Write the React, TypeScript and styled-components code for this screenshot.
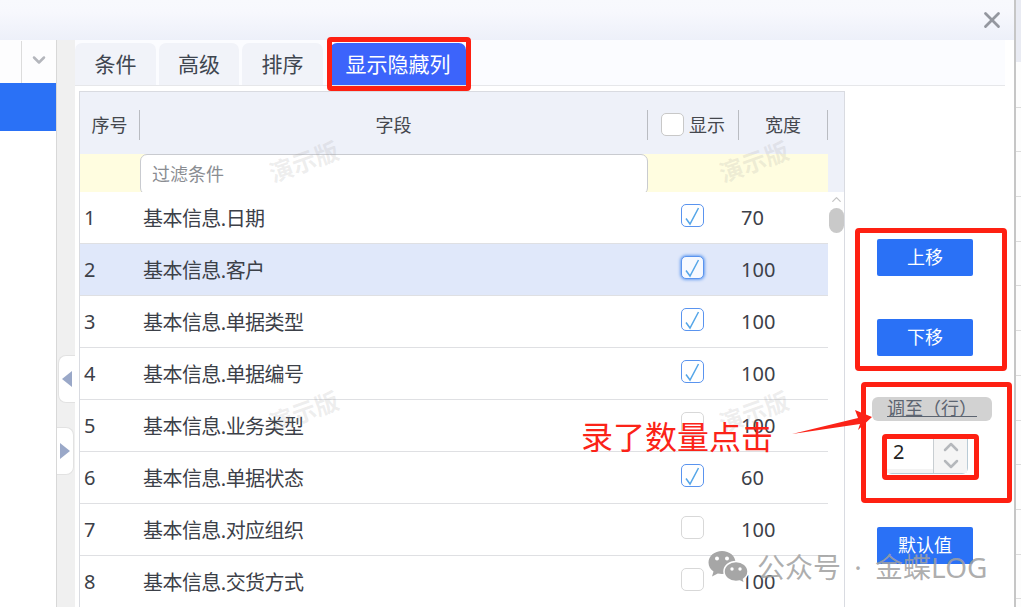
import React from 'react';
import styled, { createGlobalStyle } from 'styled-components';
import { ChevronDown, ChevronUp, X } from 'lucide-react';

const GlobalStyle = createGlobalStyle`
  html, body { margin: 0; padding: 0; background: #fff; }
  * { box-sizing: border-box; }
  body { font-family: "Noto Sans", "Noto Sans CJK SC", sans-serif; color: #3c4048; }
`;

const Page = styled.div`
  position: relative;
  width: 1021px;
  height: 607px;
  overflow: hidden;
  display: flex;
  background: #fff;
`;

const Dialog = styled.div`
  width: 1016px;
  height: 607px;
  flex: none;
  border-right: 2px solid #c6c6c6;
  display: flex;
  flex-direction: column;
`;

// the list page behind the dialog, only a sliver of it shows
const BackStrip = styled.div`
  flex: 1;
  background:
    linear-gradient(#e9ebf3, #e9ebf3) top / 100% 62px no-repeat,
    repeating-linear-gradient(#fdfdfd 0, #fdfdfd 43.7px, #dcdcdc 43.7px, #dcdcdc 44.7px) 0 63px;
`;

const TitleBar = styled.div`
  height: 40px;
  flex: none;
  display: flex;
  justify-content: flex-end;
  align-items: center;
  padding-right: 9px;
  color: #94979f;
  background: linear-gradient(#f8f9fd, #f7f8fd 30%, #edf0f9);
`;

const Body = styled.div`
  flex: 1;
  min-height: 0;
  display: flex;
`;

const LeftPanel = styled.div`
  width: 57px;
  flex: none;
  border-right: 1px solid #d8d8d8;
`;

const LeftHead = styled.div`
  height: 43px;
  display: flex;
  justify-content: flex-end;
  align-items: center;
  color: #b4b6bc;
  background: #fdfdfe;
`;

const LeftArrow = styled.div`
  width: 35px;
  height: 42px;
  border-left: 1px solid #dcdcdc;
  display: flex;
  align-items: center;
  justify-content: center;
  padding-bottom: 4px;
`;

const LeftSelected = styled.div`
  height: 48px;
  background: #2a71f6;
`;

const Gutter = styled.div`
  width: 18px;
  flex: none;
  background: #f0f0f0;
  display: flex;
  flex-direction: column;
  padding-top: 315px;
  gap: 24px;
`;

const Handle = styled.div<{ $side: 'left' | 'right' }>`
  width: 17px;
  height: 48px;
  display: flex;
  align-items: center;
  justify-content: center;
  background: #fff;
  border: 1px solid #e2e2e2;
  margin-left: ${(p) => (p.$side === 'left' ? '1px' : '0')};
  border-radius: ${(p) => (p.$side === 'left' ? '8px 0 0 8px' : '0 8px 8px 0')};
  border-${(p) => (p.$side === 'left' ? 'right' : 'left')}: none;
`;

const Main = styled.div`
  flex: 1;
  min-width: 0;
  display: flex;
  flex-direction: column;
`;

const TabBar = styled.div`
  height: 46px;
  flex: none;
  width: 930px;
  padding-top: 3px;
  display: flex;
  background: #fbfcff;
  border-bottom: 1px solid #e6e7ea;
`;

const Tab = styled.div<{ $active?: boolean; $width: number; $gap: number }>`
  width: ${(p) => p.$width}px;
  margin-right: ${(p) => p.$gap}px;
  height: 42px;
  font-size: 21px;
  line-height: 42px;
  text-align: center;
  border-radius: 7px 7px 0 0;
  color: ${(p) => (p.$active ? '#fff' : '#3f4650')};
  background: ${(p) => (p.$active ? '#3c64fb' : '#f1f3f9')};
`;

const Content = styled.div`
  flex: 1;
  min-height: 0;
  display: flex;
`;

const TablePane = styled.div`
  width: 766px;
  flex: none;
  margin: 5px 0 0 4px;
  border: 1px solid #d9dbe1;
  border-bottom: none;
  display: flex;
  flex-direction: column;
  overflow: hidden;
`;

const Head = styled.div`
  height: 100px;
  flex: none;
  background: #eef1f9;
  padding-right: 16px;
`;

const HeadRow = styled.div`
  height: 62px;
  padding-top: 18px;
  display: grid;
  grid-template-columns: 60px 508px 91px 89px;
`;

const HeadCell = styled.div`
  height: 30px;
  border-right: 1px solid #b9bcc2;
  display: flex;
  align-items: center;
  justify-content: center;
  gap: 5px;
  font-size: 18px;
  color: #44474d;
  padding-bottom: 2px;
`;

const FilterRow = styled.div`
  height: 38px;
  display: grid;
  grid-template-columns: 60px 508px 1fr;
  background: #fffde0;
`;

const FilterInput = styled.div`
  border: 1px solid #c9cbd0;
  border-radius: 7px;
  margin-bottom: -3px;
  background: #fff;
  padding-left: 11px;
  font-size: 18px;
  line-height: 38px;
  color: #8a8d92;
`;

const RowsArea = styled.div`
  flex: 1;
  min-height: 0;
  display: flex;
`;

const Rows = styled.div`
  width: 748px;
  flex: none;
`;

const Row = styled.div<{ $selected?: boolean }>`
  height: 52px;
  display: grid;
  grid-template-columns: 60px 508px 93px 87px;
  align-items: center;
  border-bottom: 1px solid #dfe0e3;
  font-size: 20px;
  background: ${(p) => (p.$selected ? '#e0e8fa' : '#fff')};
`;

const RowNo = styled.div`
  padding-left: 4px;
`;

const RowName = styled.div`
  padding-left: 3px;
  white-space: nowrap;
  letter-spacing: -0.55px;
`;

const CheckCell = styled.div`
  padding: 0 0 4px 33px;
  display: flex;
`;

const Check = styled.div<{ $on?: boolean; $focus?: boolean }>`
  width: 23px;
  height: 23px;
  flex: none;
  border-radius: 5px;
  border: 1px solid ${(p) => (p.$on ? '#5a94ef' : '#d8d8d8')};
  background: ${(p) => (p.$focus ? '#f6f9ff' : '#fff')};
  box-shadow: ${(p) => (p.$focus ? '0 0 3px 1px #6ba0f0' : 'none')};
`;

const HeadCheck = styled(Check)`
  border-color: #c8c8c8;
`;

const RowWidth = styled.div``;

const Scrollbar = styled.div`
  flex: 1;
  display: flex;
  flex-direction: column;
  align-items: center;
  color: #c4c4c4;
`;

const Thumb = styled.div`
  width: 15px;
  height: 25px;
  margin-top: 1px;
  border-radius: 8px;
  background: #c9c9c9;
`;

const Side = styled.div`
  flex: 1;
  display: flex;
  flex-direction: column;
  align-items: flex-start;
  padding: 153px 0 0 32px;
`;

const BlueButton = styled.div<{ $top: number }>`
  width: 96px;
  height: 37px;
  margin-top: ${(p) => p.$top}px;
  border-radius: 2px;
  background: #2a71f6;
  color: #fff;
  font-size: 18px;
  line-height: 37px;
  text-align: center;
`;

const RowLabel = styled.div`
  width: 120px;
  height: 24px;
  margin: 41px 0 0 -5px;
  border-radius: 6px;
  background: #d2d2d2;
  padding-left: 15px;
  font-size: 18px;
  line-height: 23px;
  text-decoration: underline;
  color: #5c6470;
  white-space: nowrap;
`;

const Stepper = styled.div`
  width: 82px;
  height: 36px;
  margin: 17px 0 0 9px;
  display: flex;
  border: 1px solid #b9cbd6;
  border-top: none;
  border-left-color: #e6e6e6;
  border-radius: 0 0 6px 6px;
  background: #fff;
`;

const StepValue = styled.div`
  width: 46px;
  padding-left: 6px;
  font-size: 20px;
  line-height: 28px;
  color: #222;
  border-bottom: 4px solid #f3f3f3;
`;

const StepArrows = styled.div`
  flex: 1;
  background: #f5f5f5;
  border-left: 1px solid #c8ced2;
  display: flex;
  flex-direction: column;
  align-items: center;
  color: #b5b8bc;
`;

const StepIcon = styled.div`
  height: 17px;
  display: flex;
  align-items: center;
`;

const RedFrame = styled.div<{ $x: number; $y: number; $w: number; $h: number }>`
  position: absolute;
  left: ${(p) => p.$x}px;
  top: ${(p) => p.$y}px;
  width: ${(p) => p.$w}px;
  height: ${(p) => p.$h}px;
  border: 5px solid #fe2012;
  border-radius: 4px;
`;

const Callout = styled.div`
  position: absolute;
  left: 581px;
  top: 415px;
  font-size: 32px;
  line-height: 44px;
  color: #fb2318;
  white-space: nowrap;
`;

const CalloutArrow = styled.svg`
  position: absolute;
  left: 790px;
  top: 405px;
`;

const DemoMark = styled.div<{ $x: number; $y: number }>`
  position: absolute;
  left: ${(p) => p.$x}px;
  top: ${(p) => p.$y}px;
  font-size: 24px;
  line-height: 30px;
  font-weight: 700;
  color: rgba(150, 150, 150, 0.16);
  transform: rotate(-20deg);
  white-space: nowrap;
`;

const WeChatMark = styled.div`
  position: absolute;
  left: 708px;
  top: 547px;
  display: flex;
  align-items: center;
  gap: 9px;
  font-size: 28px;
  line-height: 40px;
  word-spacing: 6px;
  color: rgba(160, 160, 160, 0.85);
  white-space: nowrap;
`;

const rows = [
  { no: 1, name: '日期', on: true, width: 70 },
  { no: 2, name: '客户', on: true, width: 100, selected: true },
  { no: 3, name: '单据类型', on: true, width: 100 },
  { no: 4, name: '单据编号', on: true, width: 100 },
  { no: 5, name: '业务类型', on: false, width: 100 },
  { no: 6, name: '单据状态', on: true, width: 60 },
  { no: 7, name: '对应组织', on: false, width: 100 },
  { no: 8, name: '交货方式', on: false, width: 100 },
];

function Tick() {
  return (
    <svg width="21" height="21" viewBox="0 0 21 21" fill="none">
      <path d="M4 13.500 L8 19 L16.500 3" stroke="#55a6e8" strokeWidth="1.500" />
    </svg>
  );
}

function WeChatIcon() {
  return (
    <svg width="40" height="34" viewBox="0 0 40 34">
      <path
        d="M14 1C6.500 1 .5 6 .5 12.500c0 3.700 2 7 5 9L4 26.500l5.800-3c1.300.3 2.800.5 4.200.5 7.500 0 13.500-5 13.500-11.500S21.500 1 14 1z"
        fill="#a6a6a6"
      />
      <path
        d="M28 11.500c-6.700 0-12 4.500-12 10s5.300 10 12 10c1.300 0 2.600-.2 3.800-.5l5 2.500-1.300-4.300c2.700-1.800 4.500-4.600 4.500-7.700 0-5.500-5.300-10-12-10z"
        fill="#a6a6a6"
        stroke="#fff"
        strokeWidth="1.500"
      />
      <circle cx="9" cy="8.500" r="2" fill="#fff" />
      <circle cx="19" cy="8.500" r="2" fill="#fff" />
      <circle cx="24" cy="19" r="1.700" fill="#fff" />
      <circle cx="32" cy="19" r="1.700" fill="#fff" />
    </svg>
  );
}

export default function App() {
  return (
    <Page>
      <GlobalStyle />
      <Dialog>
        <TitleBar>
          <X size={26} strokeWidth={2.6} />
        </TitleBar>
        <Body>
          <LeftPanel>
            <LeftHead>
              <LeftArrow>
                <ChevronDown size={20} strokeWidth={3} />
              </LeftArrow>
            </LeftHead>
            <LeftSelected />
          </LeftPanel>
          <Gutter>
            <Handle $side="left">
              <svg width="10" height="16" viewBox="0 0 10 16">
                <path d="M0 8 L10 0 V16 Z" fill="#9aa8c8" />
              </svg>
            </Handle>
            <Handle $side="right">
              <svg width="10" height="16" viewBox="0 0 10 16">
                <path d="M10 8 L0 0 V16 Z" fill="#9aa8c8" />
              </svg>
            </Handle>
          </Gutter>
          <Main>
            <TabBar>
              <Tab $width={81} $gap={3}>条件</Tab>
              <Tab $width={80} $gap={3}>高级</Tab>
              <Tab $width={81} $gap={7}>排序</Tab>
              <Tab $width={136} $gap={0} $active>显示隐藏列</Tab>
            </TabBar>
            <Content>
              <TablePane>
                <Head>
                  <HeadRow>
                    <HeadCell>序号</HeadCell>
                    <HeadCell>字段</HeadCell>
                    <HeadCell>
                      <HeadCheck />
                      显示
                    </HeadCell>
                    <HeadCell>宽度</HeadCell>
                  </HeadRow>
                  <FilterRow>
                    <span />
                    <FilterInput>过滤条件</FilterInput>
                    <span />
                  </FilterRow>
                </Head>
                <RowsArea>
                  <Rows>
                    {rows.map((r) => (
                      <Row key={r.no} $selected={r.selected}>
                        <RowNo>{r.no}</RowNo>
                        <RowName>基本信息.{r.name}</RowName>
                        <CheckCell>
                          <Check $on={r.on} $focus={r.selected}>
                            {r.on && <Tick />}
                          </Check>
                        </CheckCell>
                        <RowWidth>{r.width}</RowWidth>
                      </Row>
                    ))}
                  </Rows>
                  <Scrollbar>
                    <ChevronUp size={15} strokeWidth={2} />
                    <Thumb />
                  </Scrollbar>
                </RowsArea>
              </TablePane>
              <Side>
                <BlueButton $top={0}>上移</BlueButton>
                <BlueButton $top={43}>下移</BlueButton>
                <RowLabel>调至（行）</RowLabel>
                <Stepper>
                  <StepValue>2</StepValue>
                  <StepArrows>
                    <StepIcon>
                      <ChevronUp size={24} strokeWidth={2.5} />
                    </StepIcon>
                    <StepIcon>
                      <ChevronDown size={24} strokeWidth={2.5} />
                    </StepIcon>
                  </StepArrows>
                </Stepper>
                <BlueButton $top={53}>默认值</BlueButton>
              </Side>
            </Content>
          </Main>
        </Body>
      </Dialog>
      <BackStrip />

      <DemoMark $x={268} $y={147}>演示版</DemoMark>
      <DemoMark $x={718} $y={147}>演示版</DemoMark>
      <DemoMark $x={268} $y={397}>演示版</DemoMark>
      <DemoMark $x={718} $y={397}>演示版</DemoMark>

      <RedFrame $x={327} $y={37} $w={144} $h={54} />
      <RedFrame $x={855} $y={228} $w={152} $h={143} />
      <RedFrame $x={861} $y={382} $w={151} $h={121} />
      <RedFrame $x={882} $y={434} $w={97} $h={46} />

      <Callout>录了数量点击</Callout>
      <CalloutArrow width="84" height="36" viewBox="0 0 84 36">
        <path d="M2 29 L68 13 L65 5 L82 12 L68 25 L70 19 Z" fill="#fb2318" />
      </CalloutArrow>

      <WeChatMark>
        <WeChatIcon />
        公众号 · 金蝶LOG
      </WeChatMark>
    </Page>
  );
}
